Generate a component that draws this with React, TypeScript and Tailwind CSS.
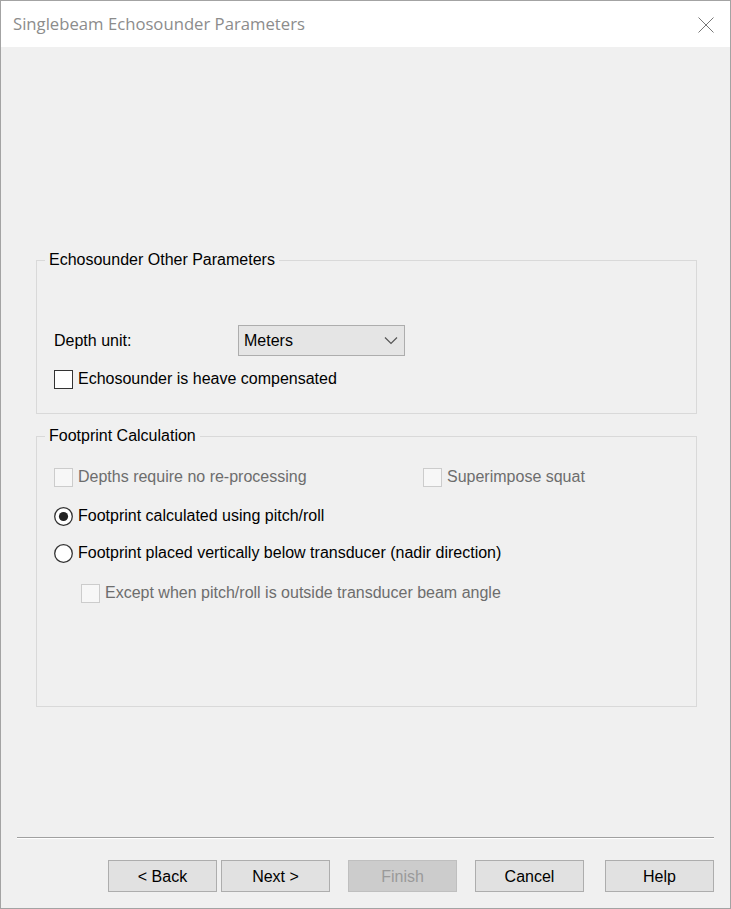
import React from "react";

const font = { fontFamily: '"Liberation Sans", Arial, sans-serif' };

function CheckBox({ disabled }: { disabled?: boolean }) {
  return (
    <span
      className={
        "block w-[19px] h-[19px] shrink-0 border " +
        (disabled ? "border-[#cccccc] bg-[#f7f7f7]" : "border-[#333333] bg-white")
      }
    />
  );
}

function Radio({ checked }: { checked?: boolean }) {
  return (
    <svg width="19" height="19" viewBox="0 0 19 19" className="shrink-0">
      <circle cx="9.5" cy="9.5" r="8.8" fill="#ffffff" stroke="#333333" strokeWidth="1.3" />
      {checked && <circle cx="9.5" cy="9.5" r="4.6" fill="#222222" />}
    </svg>
  );
}

function Btn({ label, disabled }: { label: string; disabled?: boolean }) {
  return (
    <div
      className={
        "w-[109px] h-[32px] flex items-center justify-center border text-[16px] pt-[1px] " +
        (disabled
          ? "bg-[#cccccc] border-[#bfbfbf] text-[#9a9a9a]"
          : "bg-[#e1e1e1] border-[#adadad] text-black")
      }
    >
      {label}
    </div>
  );
}

export default function App() {
  return (
    <div
      className="w-[731px] h-[909px] border border-[#a3a3a3] flex flex-col bg-[#f0f0f0] text-black"
      style={font}
    >
      {/* Title bar */}
      <div className="h-[46px] bg-white flex items-center justify-between pl-[12px] pr-[16px] shrink-0">
        <span
          className="text-[16.7px] text-[#8c8c8c]"
          style={{ fontFamily: '"Open Sans", "Noto Sans", sans-serif' }}
        >
          Singlebeam Echosounder Parameters
        </span>
        <svg width="16" height="16" viewBox="0 0 16 16" className="mt-[1px]">
          <path d="M0.5 0.5 L15.5 15.5 M15.5 0.5 L0.5 15.5" stroke="#777777" strokeWidth="1" fill="none" />
        </svg>
      </div>

      {/* Body */}
      <div className="flex-1 flex flex-col">
        {/* Group 1 */}
        <fieldset className="ml-[35px] mt-[203px] w-[661px] border border-[#d9d9d9] pl-[17px] pb-[24px]">
          <legend className="-ml-[9px] px-[4px] h-[20px] leading-[20px] text-[16px]">
            Echosounder Other Parameters
          </legend>
          <div className="mt-[55px] flex items-center h-[31px]">
            <span className="w-[184px] text-[16px]">Depth unit:</span>
            <div className="w-[167px] h-[31px] bg-[#e5e5e5] border border-[#adadad] flex items-center justify-between pl-[5px] pr-[6px]">
              <span className="text-[16px]">Meters</span>
              <svg width="14" height="9" viewBox="0 0 14 9">
                <path d="M1 1.5 L7 7.5 L13 1.5" stroke="#555555" strokeWidth="1.2" fill="none" />
              </svg>
            </div>
          </div>
          <div className="mt-[13px] flex items-center gap-[5px] h-[20px]">
            <CheckBox />
            <span className="text-[16px]">Echosounder is heave compensated</span>
          </div>
        </fieldset>

        {/* Group 2 */}
        <fieldset className="ml-[35px] mt-[12px] w-[661px] h-[281px] border border-[#d9d9d9] pl-[17px]">
          <legend className="-ml-[9px] px-[4px] h-[20px] leading-[20px] text-[16px]">
            Footprint Calculation
          </legend>
          <div className="mt-[21px] flex items-center h-[20px] text-[#6d6d6d] text-[16px]">
            <div className="w-[369px] flex items-center gap-[5px]">
              <CheckBox disabled />
              <span>Depths require no re-processing</span>
            </div>
            <div className="flex items-center gap-[5px]">
              <CheckBox disabled />
              <span>Superimpose squat</span>
            </div>
          </div>
          <div className="mt-[19px] flex items-center gap-[5px] h-[20px] text-[16px]">
            <Radio checked />
            <span>Footprint calculated using pitch/roll</span>
          </div>
          <div className="mt-[17px] flex items-center gap-[5px] h-[20px] text-[16px]">
            <Radio />
            <span>Footprint placed vertically below transducer (nadir direction)</span>
          </div>
          <div className="mt-[20px] ml-[27px] flex items-center gap-[5px] h-[20px] text-[16px] text-[#6d6d6d]">
            <CheckBox disabled />
            <span>Except when pitch/roll is outside transducer beam angle</span>
          </div>
        </fieldset>

        {/* Separator */}
        <div className="mt-[130px] ml-[16px] w-[697px] border-t border-[#a0a0a0] border-b border-b-white" />

        {/* Buttons */}
        <div className="mt-[21px] flex items-center pl-[107px]">
          <Btn label="< Back" />
          <div className="w-[4px]" />
          <Btn label="Next >" />
          <div className="w-[18px]" />
          <Btn label="Finish" disabled />
          <div className="w-[18px]" />
          <Btn label="Cancel" />
          <div className="w-[21px]" />
          <Btn label="Help" />
        </div>
      </div>
    </div>
  );
}
